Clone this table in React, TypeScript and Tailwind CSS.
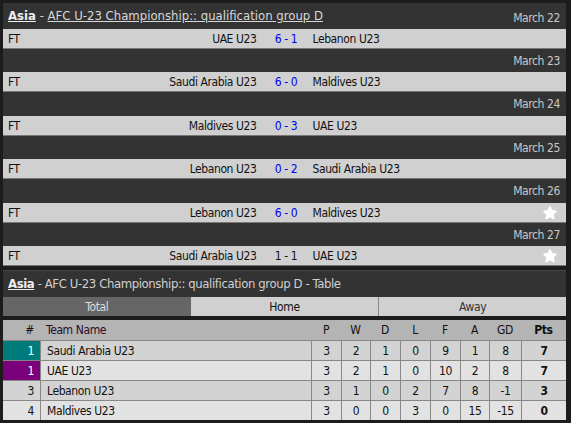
import { Star } from "lucide-react";

const matches = [
  { date: "March 22", home: "UAE U23", score: "6 - 1", away: "Lebanon U23", star: false, gap: "" },
  { date: "March 23", home: "Saudi Arabia U23", score: "6 - 0", away: "Maldives U23", star: false, gap: "h-[23px]" },
  { date: "March 24", home: "Maldives U23", score: "0 - 3", away: "UAE U23", star: false, gap: "h-[24px]" },
  { date: "March 25", home: "Lebanon U23", score: "0 - 2", away: "Saudi Arabia U23", star: false, gap: "h-[23px]" },
  { date: "March 26", home: "Lebanon U23", score: "6 - 0", away: "Maldives U23", star: true, gap: "h-[24px]" },
  { date: "March 27", home: "Saudi Arabia U23", score: "1 - 1", away: "UAE U23", star: true, gap: "h-[23px]" },
];

const standings = [
  { rank: "1", team: "Saudi Arabia U23", p: 3, w: 2, d: 1, l: 0, f: 9, a: 1, gd: 8, pts: 7, tag: "bg-[#007b7b] text-white" },
  { rank: "1", team: "UAE U23", p: 3, w: 2, d: 1, l: 0, f: 10, a: 2, gd: 8, pts: 7, tag: "bg-[#7b007b] text-white" },
  { rank: "3", team: "Lebanon U23", p: 3, w: 1, d: 0, l: 2, f: 7, a: 8, gd: -1, pts: 3, tag: "" },
  { rank: "4", team: "Maldives U23", p: 3, w: 0, d: 0, l: 3, f: 0, a: 15, gd: -15, pts: 0, tag: "" },
];

const font = { fontFamily: '"DejaVu Sans Condensed", "DejaVu Sans", sans-serif' };

export default function App() {
  return (
    <div className="w-[571px] h-[423px] bg-[#1c1c1c] pt-[3px] pl-[3px] pr-[5px] text-[12px] tracking-[-0.4px]" style={font}>
      <div className="h-[26px] bg-[#333333] flex items-center px-[5px] text-[13px] tracking-normal">
        <div className="text-[#d8d8d8]">
          <span className="font-bold underline text-[#eeeeee]">Asia</span>
          <span> - </span>
          <span className="underline">AFC U-23 Championship:: qualification group D</span>
        </div>
      </div>
      {matches.map((m, i) => (
        <div key={i}>
          {i > 0 && (
            <div className={`${m.gap} bg-[#333333] flex items-center justify-end pr-[6px] text-[#c8c8c8]`}>{m.date}</div>
          )}
          <div className="h-[20px] bg-[#d0d0d0] border-b border-[#777777] flex items-center text-[#111111] relative">
            <div className="w-[40px] pl-[5px]">FT</div>
            <div className="flex-1 text-right">{m.home}</div>
            <div className={`w-[56px] pl-[3px] text-center ${m.score === "1 - 1" ? "text-[#111111]" : "text-[#0000ee]"}`}>{m.score}</div>
            <div className="flex-1">{m.away}</div>
            <div className="w-[40px] flex justify-end pr-[8px]">
              {m.star && <Star className="w-[16px] h-[16px] text-white fill-white" strokeWidth={1} />}
            </div>
            {i === 0 && (
              <div className="absolute right-[6px] top-[-20px] text-[#c8c8c8]">{m.date}</div>
            )}
          </div>
        </div>
      ))}
      <div className="h-[4px]" />
      <div className="h-[27px] bg-[#333333] border-t border-[#444444] flex items-center px-[5px] text-[13px] text-[#d0d0d0]">
        <span className="font-bold underline text-[#eeeeee]">Asia</span>
        <span>&nbsp;- AFC U-23 Championship:: qualification group D - Table</span>
      </div>
      <div className="grid grid-cols-3 h-[19px] text-[12px]">
        <div className="bg-[#666666] text-[#dddddd] flex items-center justify-center">Total</div>
        <div className="bg-[#d0d0d0] text-[#111111] flex items-center justify-center">Home</div>
        <div className="bg-[#d0d0d0] text-[#333333] flex items-center justify-center border-l border-[#888888]">Away</div>
      </div>
      <div className="h-[4px]" />
      <div className="grid grid-cols-[37px_271px_30px_29px_30px_30px_30px_29px_32px_1fr] h-[20px] bg-[#b4b4b4] text-[#111111] items-center">
        <div className="text-right pr-[6px]">#</div>
        <div className="pl-[6px] text-[#2a0a2a]">Team Name</div>
        <div className="text-center">P</div>
        <div className="text-center">W</div>
        <div className="text-center">D</div>
        <div className="text-center">L</div>
        <div className="text-center">F</div>
        <div className="text-center">A</div>
        <div className="text-center">GD</div>
        <div className="text-center font-bold">Pts</div>
      </div>
      {standings.map((r, i) => (
        <div
          key={i}
          className={`grid grid-cols-[37px_271px_30px_29px_30px_30px_30px_29px_32px_1fr] h-[20px] border-t border-[#888888] text-[#111111] ${i % 2 === 0 ? "bg-[#d3d3d3]" : "bg-[#e2e2e2]"}`}
        >
          <div className={`text-right pr-[6px] flex items-center justify-end ${r.tag}`}>{r.rank}</div>
          <div className="pl-[6px] border-l border-[#888888] flex items-center">{r.team}</div>
          {[r.p, r.w, r.d, r.l, r.f, r.a, r.gd].map((v, j) => (
            <div key={j} className="border-l border-[#888888] flex items-center justify-center">{v}</div>
          ))}
          <div className="border-l border-[#888888] flex items-center justify-center font-bold">{r.pts}</div>
        </div>
      ))}
    </div>
  );
}
